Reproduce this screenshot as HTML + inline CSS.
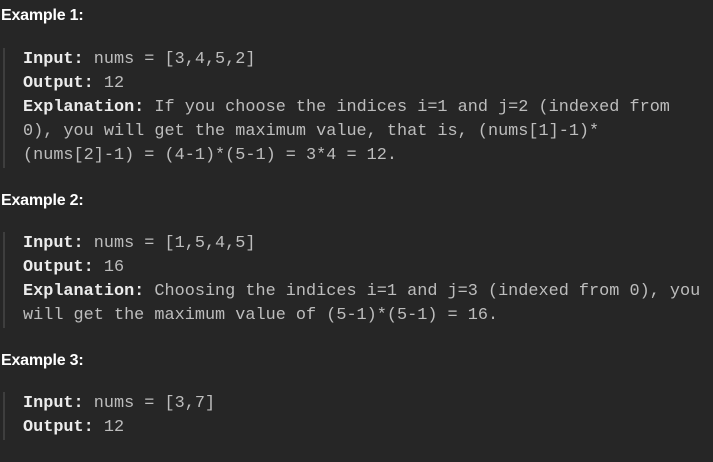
<!DOCTYPE html>
<html><head><style>
body{margin:0;width:713px;height:462px;background:#262626;overflow:hidden;position:relative;font-family:"Liberation Sans",sans-serif}
.h{position:absolute;left:1px;font-weight:bold;font-size:16px;color:#fff;line-height:20px;letter-spacing:-0.2px}
.b{position:absolute;left:3px;border-left:2px solid #3e3e3e;padding-left:18px;font-family:"Liberation Mono",monospace;font-size:16.85px;line-height:24px;color:#bdbdbd;white-space:pre}
.b b{color:#ececec}
</style></head><body>
<div class="h" style="top:6px">Example 1:</div>
<div class="b" style="top:48px"><b>Input:</b> nums = [3,4,5,2]
<b>Output:</b> 12
<b>Explanation:</b> If you choose the indices i=1 and j=2 (indexed from
0), you will get the maximum value, that is, (nums[1]-1)*
(nums[2]-1) = (4-1)*(5-1) = 3*4 = 12.</div>
<div class="h" style="top:191px">Example 2:</div>
<div class="b" style="top:232px"><b>Input:</b> nums = [1,5,4,5]
<b>Output:</b> 16
<b>Explanation:</b> Choosing the indices i=1 and j=3 (indexed from 0), you
will get the maximum value of (5-1)*(5-1) = 16.</div>
<div class="h" style="top:351px">Example 3:</div>
<div class="b" style="top:392px"><b>Input:</b> nums = [3,7]
<b>Output:</b> 12</div>
</body></html>
